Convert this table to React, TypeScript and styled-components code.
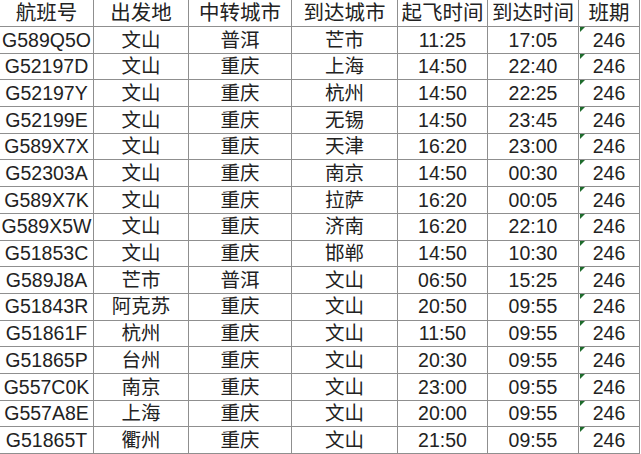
import * as React from 'react';
import styled, { createGlobalStyle } from 'styled-components';

const GlobalStyle = createGlobalStyle`
  html, body {
    margin: 0;
    padding: 0;
    background: #ffffff;
  }
  body {
    width: 641px;
    height: 454px;
    overflow: hidden;
    font-family: 'Liberation Sans', 'Noto Sans CJK SC', sans-serif;
    color: #222222;
  }
`;

const Sheet = styled.div`
  display: grid;
  grid-template-columns: 94px 95px 103px 106px 90px 91px 61px;
  grid-template-rows: 27px repeat(16, 1fr);
  width: 640px;
  height: 454px;
`;

interface CellProps {
  head?: boolean;
  flag?: boolean;
}
const Cell = styled.div<CellProps>`
  position: relative;
  display: flex;
  align-items: center;
  justify-content: center;
  box-sizing: border-box;
  border-right: 1px solid #8f8f8f;
  border-bottom: 1px solid #8f8f8f;
  font-size: ${({ head }) => (head ? '20.5px' : '19.5px')};
  line-height: 1;
  white-space: nowrap;
  overflow: hidden;
  padding-top: 1px;
`;

// excel's little "number stored as text" marker
const Flag = styled.span`
  position: absolute;
  left: 1px;
  top: 0;
  width: 0;
  height: 0;
  border-top: 5px solid #1d6b2c;
  border-right: 5px solid transparent;
`;

const headers = ['航班号', '出发地', '中转城市', '到达城市', '起飞时间', '到达时间', '班期'];

const rows: string[][] = [
  ['G589Q5O', '文山', '普洱', '芒市', '11:25', '17:05'],
  ['G52197D', '文山', '重庆', '上海', '14:50', '22:40'],
  ['G52197Y', '文山', '重庆', '杭州', '14:50', '22:25'],
  ['G52199E', '文山', '重庆', '无锡', '14:50', '23:45'],
  ['G589X7X', '文山', '重庆', '天津', '16:20', '23:00'],
  ['G52303A', '文山', '重庆', '南京', '14:50', '00:30'],
  ['G589X7K', '文山', '重庆', '拉萨', '16:20', '00:05'],
  ['G589X5W', '文山', '重庆', '济南', '16:20', '22:10'],
  ['G51853C', '文山', '重庆', '邯郸', '14:50', '10:30'],
  ['G589J8A', '芒市', '普洱', '文山', '06:50', '15:25'],
  ['G51843R', '阿克苏', '重庆', '文山', '20:50', '09:55'],
  ['G51861F', '杭州', '重庆', '文山', '11:50', '09:55'],
  ['G51865P', '台州', '重庆', '文山', '20:30', '09:55'],
  ['G557C0K', '南京', '重庆', '文山', '23:00', '09:55'],
  ['G557A8E', '上海', '重庆', '文山', '20:00', '09:55'],
  ['G51865T', '衢州', '重庆', '文山', '21:50', '09:55'],
];

export default function App() {
  return (
    <>
      <GlobalStyle />
      <Sheet>
        {headers.map(h => (
          <Cell key={h} head>
            {h}
          </Cell>
        ))}
        {rows.map(r => (
          <React.Fragment key={r[0]}>
            {r.map((v, i) => (
              <Cell key={i}>{v}</Cell>
            ))}
            <Cell flag>
              <Flag />
              246
            </Cell>
          </React.Fragment>
        ))}
      </Sheet>
    </>
  );
}
